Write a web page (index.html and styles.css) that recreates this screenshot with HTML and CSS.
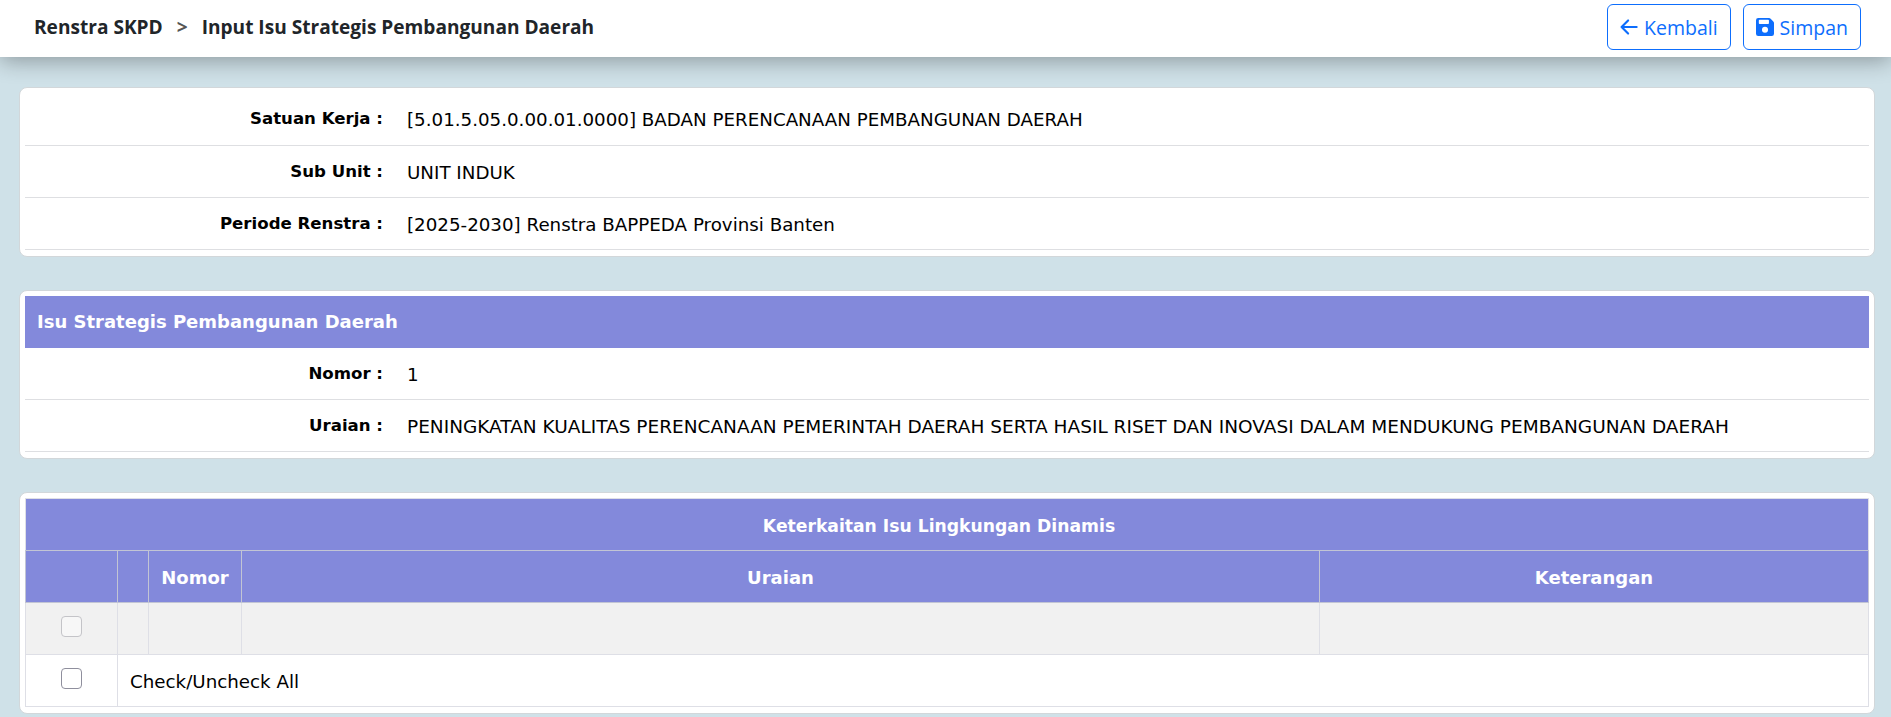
FILE: index.html
```html
<!DOCTYPE html>
<html lang="id">
<head>
<meta charset="utf-8">
<title>Input Isu Strategis Pembangunan Daerah</title>
<link rel="stylesheet" href="styles.css">
</head>
<body>
<header class="navbar">
  <h1 class="crumbs"><span>Renstra SKPD</span><span class="sep">&gt;</span><span>Input Isu Strategis Pembangunan Daerah</span></h1>
  <div class="actions">
    <button class="btn" type="button">
      <svg class="icon" viewBox="0 0 16 16" aria-hidden="true"><path fill="none" stroke="currentColor" stroke-width="1.9" stroke-linecap="round" stroke-linejoin="round" d="M14.800 8H1.400M7.200 2.200 1.400 8l5.800 5.800"/></svg>
      <span>Kembali</span>
    </button>
    <button class="btn" type="button">
      <svg class="icon" viewBox="0 0 16 16" aria-hidden="true"><path fill="currentColor" fill-rule="evenodd" d="M2 0h9.600c.5 0 1 .2 1.400.6L15.400 3c.4.4.6.9.6 1.400V14a2 2 0 0 1-2 2H2a2 2 0 0 1-2-2V2a2 2 0 0 1 2-2Zm1.200 1.600c-.4 0-.7.3-.7.7v2.400c0 .4.3.7.7.7h7.600c.4 0 .7-.3.7-.7V2.300c0-.4-.3-.7-.7-.7H3.200ZM8 7.800a2.700 2.700 0 1 0 0 5.400 2.700 2.700 0 0 0 0-5.400Z"/></svg>
      <span>Simpan</span>
    </button>
  </div>
</header>
<main class="content">
  <section class="card">
    <table class="info">
      <colgroup><col class="c-label"><col></colgroup>
      <tr><th>Satuan Kerja :</th><td>[5.01.5.05.0.00.01.0000] BADAN PERENCANAAN PEMBANGUNAN DAERAH</td></tr>
      <tr><th>Sub Unit :</th><td>UNIT INDUK</td></tr>
      <tr><th>Periode Renstra :</th><td>[2025-2030] Renstra BAPPEDA Provinsi Banten</td></tr>
    </table>
  </section>
  <section class="card">
    <table class="info">
      <colgroup><col class="c-label"><col></colgroup>
      <tr><th class="band" colspan="2">Isu Strategis Pembangunan Daerah</th></tr>
      <tr><th>Nomor :</th><td>1</td></tr>
      <tr><th>Uraian :</th><td class="long">PENINGKATAN KUALITAS PERENCANAAN PEMERINTAH DAERAH SERTA HASIL RISET DAN INOVASI DALAM MENDUKUNG PEMBANGUNAN DAERAH</td></tr>
    </table>
  </section>
  <section class="card">
    <table class="grid">
      <colgroup><col class="c-check"><col class="c-mark"><col class="c-num"><col class="c-text"><col></colgroup>
      <thead>
        <tr><th class="title" colspan="5">Keterkaitan Isu Lingkungan Dinamis</th></tr>
        <tr><th></th><th></th><th>Nomor</th><th>Uraian</th><th>Keterangan</th></tr>
      </thead>
      <tbody>
        <tr class="muted"><td class="center"><input class="check" type="checkbox" disabled></td><td></td><td></td><td></td><td></td></tr>
        <tr><td class="center"><input class="check" type="checkbox"></td><td colspan="4">Check/Uncheck All</td></tr>
      </tbody>
    </table>
  </section>
</main>
</body>
</html>
```
FILE: styles.css
```css
* { box-sizing: border-box; }
html, body { height: 100%; overflow: hidden; }
body {
  margin: 0;
  background: #cfe1e8;
  font-family: "DejaVu Sans", Verdana, sans-serif;
  font-size: 18.25px;
  color: #000;
}
.navbar {
  height: 57px;
  background: #fff;
  display: flex;
  align-items: center;
  justify-content: space-between;
  padding: 0 30px 3px 34px;
  box-shadow: 0 4px 22px rgba(0, 0, 0, .32);
  position: relative;
}
.crumbs {
  margin: 0;
  display: flex;
  gap: 14px;
  font-family: "Open Sans", sans-serif;
  font-size: 19.1px;
  font-weight: 700;
  color: #212529;
}
.sep { color: #555; }
.actions { display: flex; gap: 12px; }
.btn {
  height: 46px;
  display: flex;
  align-items: center;
  gap: 6px;
  padding: 0 12px;
  border: 1px solid #0d6efd;
  border-radius: 6px;
  background: #fff;
  color: #0d6efd;
  font-family: "Open Sans", sans-serif;
  font-size: 19.5px;
}
.icon { width: 18px; height: 18px; flex: none; }
.content {
  padding: 30px 16px 0 19px;
  display: flex;
  flex-direction: column;
  gap: 33px;
}
.card {
  background: #fff;
  border: 1px solid #d2d7da;
  border-radius: 8px;
  padding: 5px 5px 6px;
}
.info, .grid { width: 100%; border-collapse: collapse; }
.info { table-layout: fixed; }
.c-label { width: 370px; }
.info th, .info td {
  height: 52px;
  padding: 2px 12px 0;
  border-bottom: 1px solid #dedfe2;
  vertical-align: middle;
}
.info td { white-space: nowrap; }
.info .long { font-size: 18.5px; }
.info th { text-align: right; font-size: 16.6px; font-weight: 700; padding-top: 0; }
.info .band {
  text-align: left;
  background: #8389db;
  color: #fff;
  font-size: 18px;
  padding: 0 12px;
  border-bottom: 0;
}
.grid { table-layout: fixed; border: 1px solid #dedfe6; }
.c-check { width: 92px; }
.c-mark { width: 31px; }
.c-num { width: 93px; }
.c-text { width: 1078px; }
.grid th, .grid td { height: 52px; padding: 2px 12px 0; vertical-align: middle; }
.grid th {
  background: #8389db;
  color: #fff;
  font-size: 18px;
  font-weight: 700;
  text-align: center;
  border: 1px solid #c2c5d4;
}
.grid thead tr:first-child th { border-top: 0; border-left: 0; border-right: 0; }
.grid .title { font-size: 17.2px; padding-right: 28px; }
.grid td { border: 1px solid #dedfe6; }
.muted td { background: #f1f1f1; }
.grid td.center { padding: 0 12px 4px; }
.check {
  appearance: none;
  display: block;
  margin: 0 auto;
  width: 21px;
  height: 21px;
  border: 1px solid #8f8f9d;
  border-radius: 4px;
  background: #fff;
}
.check:disabled { border-color: #c4c4c8; background: #f7f7f7; }
```
